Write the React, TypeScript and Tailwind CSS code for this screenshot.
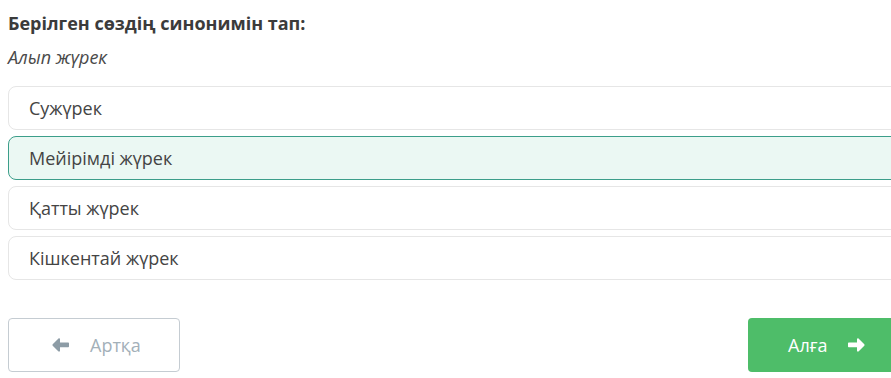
const options = ['Сужүрек', 'Мейірімді жүрек', 'Қатты жүрек', 'Кішкентай жүрек'];
const selected = 1;

const Arrow = ({ dir, className }: { dir: 'left' | 'right'; className?: string }) => (
    <svg viewBox="0 0 18 16" className={className} style={{ transform: dir === 'left' ? 'scaleX(-1)' : undefined }}>
        <path
            d="M2 5.6h8V2.2c0-.8.9-1.2 1.5-.7l5.8 5.7c.4.4.4 1.1 0 1.5l-5.8 5.7c-.6.5-1.5.1-1.5-.7v-3.4H2c-.6 0-1-.4-1-1V6.6c0-.6.4-1 1-1z"
            fill="currentColor"
        />
    </svg>
);

const App = () => {
    return (
        <div className="w-[891px] h-[378px] overflow-hidden bg-white font-['Open_Sans',sans-serif]">
            <div className="w-[920px] pl-2 pt-[11px]">
                {/* Question */}
                <h2 className="text-[18px] leading-6 font-bold text-[#3b3b3b]">Берілген сөздің синонимін тап:</h2>
                <p className="mt-[10px] text-[18px] leading-6 italic text-[#4a4a4a]">Алып жүрек</p>

                {/* Answers */}
                <div className="mt-[17px] flex flex-col gap-[6px]">
                    {options.map((opt, idx) => (
                        <div
                            key={idx}
                            className={`h-[44px] flex items-center pl-5 rounded-lg border text-[18px] text-[#444] ${
                                idx === selected
                                    ? 'border-[#3c9e8a] bg-[#ebf8f3]'
                                    : 'border-[#e6e6e6] bg-white'
                            }`}
                        >
                            {opt}
                        </div>
                    ))}
                </div>

                {/* Navigation */}
                <div className="mt-[38px] flex justify-between">
                    <button className="w-[172px] h-[54px] rounded border border-[#c5ccd2] bg-white flex items-center pl-[43px] gap-[20px] text-[18px] text-[#a3b0b9]">
                        <Arrow dir="left" className="w-[18px] h-[16px] text-[#8d9ca6]" />
                        Артқа
                    </button>
                    <button className="w-[172px] h-[54px] rounded bg-[#4ebd69] flex items-center pl-10 gap-[20px] text-[18px] text-white">
                        Алға
                        <Arrow dir="right" className="w-[18px] h-[16px]" />
                    </button>
                </div>
            </div>
        </div>
    );
};

export default App;
